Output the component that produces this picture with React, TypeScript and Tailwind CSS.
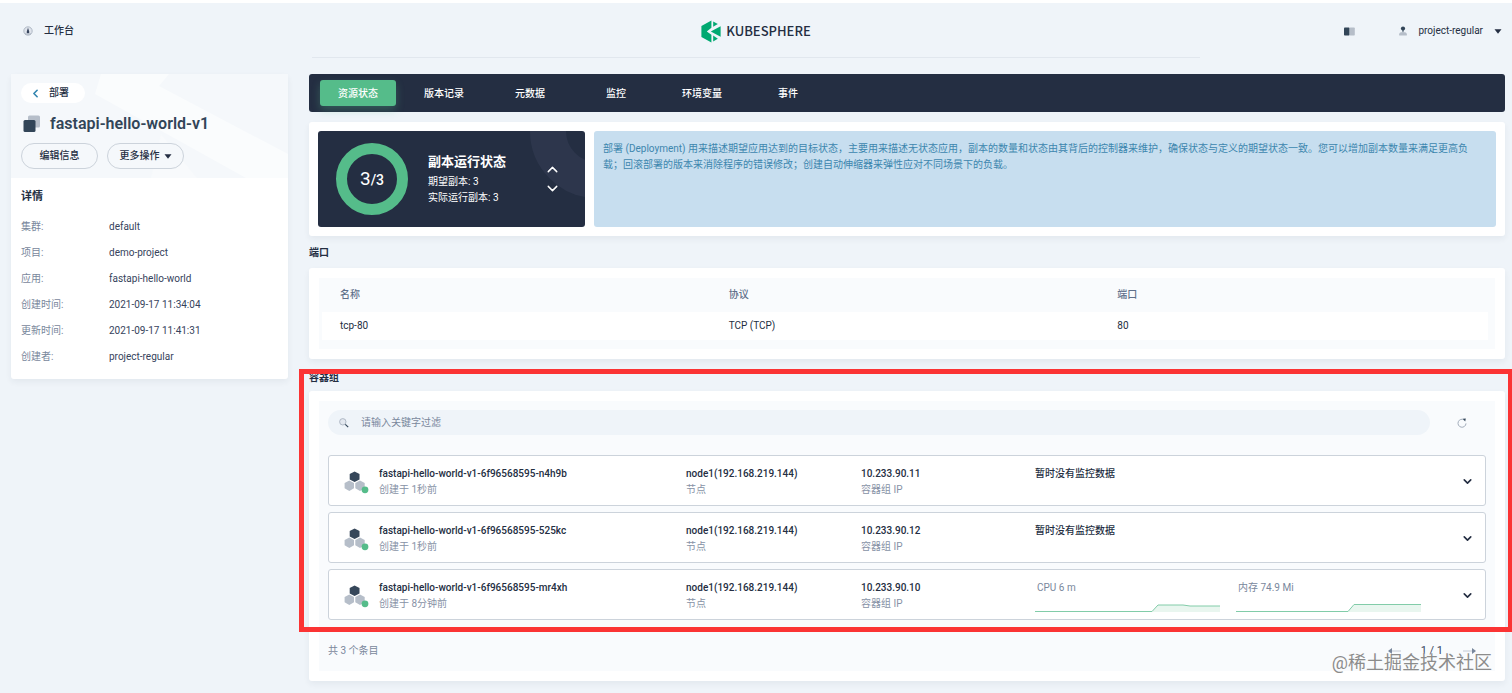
import { useState } from 'react';
import { ChevronDown, ChevronLeft, ChevronUp } from 'lucide-react';

// --- Data ---
const TABS = ['资源状态', '版本记录', '元数据', '监控', '环境变量', '事件'];

const DETAILS = [
  { label: '集群', value: 'default' },
  { label: '项目', value: 'demo-project' },
  { label: '应用', value: 'fastapi-hello-world' },
  { label: '创建时间', value: '2021-09-17 11:34:04' },
  { label: '更新时间', value: '2021-09-17 11:41:31' },
  { label: '创建者', value: 'project-regular' },
];

const PORTS = [{ name: 'tcp-80', protocol: 'TCP (TCP)', port: 80 }];

type Metric = { label: string; line: string };
type Pod = { name: string; age: string; node: string; ip: string; metrics?: Metric[] };

const PODS: Pod[] = [
  { name: 'fastapi-hello-world-v1-6f96568595-n4h9b', age: '1秒前', node: 'node1(192.168.219.144)', ip: '10.233.90.11' },
  { name: 'fastapi-hello-world-v1-6f96568595-525kc', age: '1秒前', node: 'node1(192.168.219.144)', ip: '10.233.90.12' },
  {
    name: 'fastapi-hello-world-v1-6f96568595-mr4xh',
    age: '8分钟前',
    node: 'node1(192.168.219.144)',
    ip: '10.233.90.10',
    metrics: [
      { label: 'CPU 6 m', line: '0,8.5 117,8.5 123,2 148,2 155,3 185,3' },
      { label: '内存 74.9 Mi', line: '0,8.5 112,8.5 118,1.5 185,1.5' },
    ],
  },
];

const CARD = 'rounded-[3px] bg-white shadow-[0_3px_6px_rgba(36,46,66,0.06)]';

// --- Icons ---
function Caret() {
  return (
    <svg width="8" height="5" viewBox="0 0 8 5" aria-hidden="true">
      <path d="M0.5 0.3h7L4 4.7z" fill="#242e42" />
    </svg>
  );
}

function DashboardIcon() {
  return (
    <svg width="10" height="10" viewBox="0 0 10 10" aria-hidden="true">
      <circle cx="5" cy="5" r="4.2" fill="#dfe4ec" stroke="#a2acba" strokeWidth="0.8" />
      <path d="M5 1.8L6.2 5.6a1.3 1.3 0 1 1-2.4 0z" fill="#36435c" />
      <path d="M2 8h6" stroke="#a2acba" strokeWidth="0.8" />
    </svg>
  );
}

function BookIcon() {
  return (
    <svg width="11" height="9" viewBox="0 0 11 9" aria-hidden="true">
      <rect x="0" y="0.5" width="5.6" height="8" rx="0.8" fill="#324558" />
      <rect x="5.6" y="0.5" width="5.2" height="8" rx="0.8" fill="#b6bec9" />
    </svg>
  );
}

function UserIcon() {
  return (
    <svg width="8" height="10" viewBox="0 0 8 10" aria-hidden="true">
      <path d="M0.2 9.6V8.2C0.2 6.8 1.6 6 4 6s3.8.8 3.8 2.2v1.4z" fill="#b6bec9" />
      <circle cx="4" cy="2.5" r="2.1" fill="#324558" />
      <path d="M3.3 3.5h1.4L4.4 6h-.8z" fill="#324558" />
    </svg>
  );
}

function LayersIcon() {
  return (
    <svg width="18" height="18" viewBox="0 0 18 18" aria-hidden="true">
      <rect x="5" y="0.5" width="12" height="12" rx="1.5" fill="#b6bec9" />
      <rect x="0.5" y="5" width="12" height="12" rx="1.5" fill="#324558" />
    </svg>
  );
}

function LogoMark() {
  return (
    <svg width="20" height="23" viewBox="0 0 20 23" aria-hidden="true">
      <path d="M10.4 0.4v7.4L5.8 11.4l4.6 3.4v7.8L0.4 17V6z" fill="#00a971" />
      <path d="M12.2 1.4l4.6 2.7-4.6 2.7z" fill="#00a971" />
      <path d="M19.6 6.2v10.6L9.8 11.4z" fill="#00a971" />
      <path d="M12.2 15.6l4.6 3.2-4.6 2.8z" fill="#00a971" />
    </svg>
  );
}

function SearchIcon() {
  return (
    <svg width="10" height="10" viewBox="0 0 10 10" fill="none" aria-hidden="true">
      <circle cx="3.8" cy="3.8" r="3.2" fill="#e3e8ef" stroke="#a2acba" strokeWidth="0.8" />
      <path d="M6.3 6.3L9.2 9.2" stroke="#324558" strokeWidth="1.2" />
    </svg>
  );
}

function RefreshIcon() {
  return (
    <svg width="10" height="10" viewBox="0 0 10 10" fill="none" aria-hidden="true">
      <path d="M7.2 1.9A4 4 0 1 0 9 5.4" stroke="#a2acba" />
      <path d="M5.8 0.8L8.8 0.4 8.2 3.4z" fill="#324558" />
    </svg>
  );
}

function PodIcon() {
  return (
    <svg width="25" height="25" viewBox="0 -2 25 25" aria-hidden="true">
      <path d="M10.6 0.4l4.9 2.7v5.3l-4.9 2.7-4.9-2.7V3.1z" fill="#36475a" />
      <path d="M5.3 9.5l4.7 2.6v5.2l-4.7 2.6-4.7-2.6v-5.2z" fill="#b6bec9" />
      <path d="M16 9.5l4.7 2.6v5.2L16 19.9l-4.7-2.6v-5.2z" fill="#b6bec9" />
      <circle cx="21" cy="18.8" r="3.4" fill="#55bc8a" />
    </svg>
  );
}

function Sparkline({ line }: { line: string }) {
  return (
    <svg className="h-[9px] w-full" viewBox="0 0 185 9" preserveAspectRatio="none" aria-hidden="true">
      <polygon points={`0,9 ${line} 185,9`} fill="#e9f6ef" />
      <polyline points={line} fill="none" stroke="#82cca9" />
    </svg>
  );
}

// --- Sections ---
function Header() {
  return (
    <header className="border-t-[3px] border-white">
      <div className="grid h-[54px] grid-cols-3 items-center px-[10px] pt-[2px]">
        <a href="#workbench" className="flex items-center gap-[11px] justify-self-start pl-[13px] font-medium">
          <DashboardIcon />
          工作台
        </a>
        <a href="#home" className="flex items-center gap-[5px] justify-self-center">
          <LogoMark />
          <span className="font-['Noto_Sans_CJK_SC',sans-serif] text-[13px] leading-5 font-medium">KUBESPHERE</span>
        </a>
        <div className="flex items-center gap-11 justify-self-end">
          <button type="button" aria-label="文档"><BookIcon /></button>
          <button type="button" className="flex items-center gap-[11px]">
            <UserIcon />
            <span>project-regular</span>
            <Caret />
          </button>
        </div>
      </div>
      <div className="mx-[312px] h-px bg-[#e1e7ee]" />
    </header>
  );
}

function Sidebar() {
  return (
    <aside className={`w-[277px] shrink-0 ${CARD}`}>
      <div className="relative h-[104px] overflow-hidden bg-[#f5f8fb] px-[10px] pt-[9px]">
        <svg className="absolute inset-0 h-full w-full" viewBox="0 0 277 104" aria-hidden="true">
          <path d="M90 0h68l-10 12 129 68v24h-42L84 20z" fill="#fafcfd" />
          <path d="M140 104L150 60l36 44z" fill="#f8fafc" />
        </svg>
        <div className="relative">
          <a href="#deployments" className="flex h-5 w-16 items-center rounded-full bg-white font-medium">
            <ChevronLeft className="ml-2 size-[13px] text-[#3385b0]" strokeWidth={3} />
            <span className="ml-[7px]">部署</span>
          </a>
          <div className="mt-[9px] flex h-6 items-center gap-[9px] pl-[2px]">
            <LayersIcon />
            <h1 className="text-[16px] leading-5 font-semibold text-[#324558]">fastapi-hello-world-v1</h1>
          </div>
          <div className="mt-[7px] flex gap-[9px] font-medium">
            <button type="button" className="h-[26px] w-[77px] rounded-full border border-[#ccd3db] bg-[#f5f8fb]">编辑信息</button>
            <button type="button" className="flex h-[26px] w-[77px] items-center justify-center gap-1 rounded-full border border-[#ccd3db] bg-[#f5f8fb]">
              更多操作
              <Caret />
            </button>
          </div>
        </div>
      </div>
      <div className="px-[10px] pt-[11px] pb-[9px]">
        <h2 className="mb-[9px] text-[11px] leading-4 font-bold">详情</h2>
        <dl>
          {DETAILS.map((d) => (
            <div key={d.label} className="flex h-[26px] items-center">
              <dt className="w-[88px] text-[#79879c]">{d.label}:</dt>
              <dd className="text-[#36435c]">{d.value}</dd>
            </div>
          ))}
        </dl>
      </div>
    </aside>
  );
}

function ReplicaStatus() {
  return (
    <section className={`mt-[10px] flex gap-[9px] p-[9px] ${CARD}`}>
      <div className="relative flex h-24 w-[267px] shrink-0 items-center overflow-hidden rounded-[3px] bg-[#242e42] pl-[18px] text-white">
        <svg className="absolute top-0 right-0" width="60" height="96" viewBox="0 0 60 96" aria-hidden="true">
          <circle cx="72" cy="0" r="49" fill="none" stroke="#2d364c" strokeWidth="36" />
        </svg>
        <div className="grid size-[72px] shrink-0 place-items-center rounded-full border-[11px] border-[#55bc8a]">
          <span className="text-[14px] leading-4 font-medium">
            <span className="text-[19px] font-normal">3</span>/3
          </span>
        </div>
        <div className="ml-5">
          <h3 className="mb-[3px] text-[13px] leading-[18px] font-bold">副本运行状态</h3>
          <p className="leading-4">期望副本: 3</p>
          <p className="leading-4">实际运行副本: 3</p>
        </div>
        <div className="relative mr-6 ml-auto flex flex-col gap-[2px]">
          <button type="button" aria-label="增加副本"><ChevronUp className="size-[17px]" strokeWidth={2} /></button>
          <button type="button" aria-label="减少副本"><ChevronDown className="size-[17px]" strokeWidth={2} /></button>
        </div>
      </div>
      <p className="flex-1 rounded-[3px] bg-[#c7deef] px-[9px] pt-[10px] leading-4 text-[#3d86ae]">
        部署 (Deployment) 用来描述期望应用达到的目标状态，主要用来描述无状态应用，副本的数量和状态由其背后的控制器来维护，确保状态与定义的期望状态一致。您可以增加副本数量来满足更高负载；回滚部署的版本来消除程序的错误修改；创建自动伸缩器来弹性应对不同场景下的负载。
      </p>
    </section>
  );
}

function Ports() {
  return (
    <section>
      <h2 className="flex h-8 items-center pt-[2px] font-bold">端口</h2>
      <div className={`p-[10px] ${CARD}`}>
        <div className="bg-[#f9fbfd] pr-[7px] pb-[9px] pl-[3px]">
          <table className="w-full table-fixed border-collapse text-left">
            <thead>
              <tr className="h-[34px] text-[#5f708a]">
                <th className="pl-[18px] font-medium">名称</th>
                <th className="pl-[18px] font-medium">协议</th>
                <th className="pl-[18px] font-medium">端口</th>
              </tr>
            </thead>
            <tbody>
              {PORTS.map((p) => (
                <tr key={p.name} className="h-7 bg-white">
                  <td className="pl-[18px]">{p.name}</td>
                  <td className="pl-[18px]">{p.protocol}</td>
                  <td className="pl-[18px]">{p.port}</td>
                </tr>
              ))}
            </tbody>
          </table>
        </div>
      </div>
    </section>
  );
}

function PodRow({ pod }: { pod: Pod }) {
  return (
    <li className="flex h-[51px] items-center rounded-[3px] border border-[#ccd3db] bg-white pt-[2px] pr-[11px] pl-[15px]">
      <PodIcon />
      <div className="ml-[10px] w-[307px]">
        <p className="font-medium">{pod.name}</p>
        <p className="text-[#8792a6]">创建于 {pod.age}</p>
      </div>
      <div className="w-[175px]">
        <p className="font-medium">{pod.node}</p>
        <p className="text-[#8792a6]">节点</p>
      </div>
      <div className="w-[174px]">
        <p className="font-medium">{pod.ip}</p>
        <p className="text-[#8792a6]">容器组 IP</p>
      </div>
      <div className="flex flex-1 gap-4 self-stretch pt-2 pr-10">
        {pod.metrics ? (
          pod.metrics.map((m) => (
            <div key={m.label} className="flex-1">
              <p className="mb-[7px] pl-[2px] text-[#79879c]">{m.label}</p>
              <Sparkline line={m.line} />
            </div>
          ))
        ) : (
          <p className="font-medium">暂时没有监控数据</p>
        )}
      </div>
      <button type="button" aria-label="展开">
        <ChevronDown className="size-[13px]" strokeWidth={3} />
      </button>
    </li>
  );
}

function Pods() {
  const [keyword, setKeyword] = useState('');
  const pods = PODS.filter((p) => p.name.includes(keyword));

  return (
    <section className="relative">
      <h2 className="flex h-8 items-center pt-[6px] font-bold">容器组</h2>
      <div className={`p-[10px] ${CARD}`}>
        <div className="bg-[#f9fbfd] px-[9px] pt-[9px]">
          <div className="flex items-center">
            <label className="flex h-[25px] flex-1 items-center gap-3 rounded-full bg-[#eff4f9] pl-[11px]">
              <SearchIcon />
              <input
                className="flex-1 outline-none placeholder:text-[#79879c]"
                placeholder="请输入关键字过滤"
                aria-label="请输入关键字过滤"
                value={keyword}
                onChange={(e) => setKeyword(e.target.value)}
              />
            </label>
            <button type="button" aria-label="刷新" className="mr-[19px] ml-[27px]"><RefreshIcon /></button>
          </div>
          <ul className="mt-5 flex flex-col gap-[6px]">
            {pods.map((p) => <PodRow key={p.name} pod={p} />)}
          </ul>
          <footer className="flex h-[51px] items-center justify-between pt-[10px] text-[#79879c]">
            <span>共 {pods.length} 个条目</span>
            <div className="mr-[10px] flex items-center gap-5">
              <button type="button" aria-label="上一页">
                <svg width="13" height="8" viewBox="0 0 13 8" aria-hidden="true">
                  <path d="M4 4h9" stroke="#c3cad5" />
                  <path d="M0 4l4-3v6z" fill="#79879c" />
                </svg>
              </button>
              <span className="text-[11px] text-[#36435c]">1 / 1</span>
              <button type="button" aria-label="下一页">
                <svg width="13" height="8" viewBox="0 0 13 8" aria-hidden="true">
                  <path d="M0 4h9" stroke="#c3cad5" />
                  <path d="M13 4L9 1v6z" fill="#79879c" />
                </svg>
              </button>
            </div>
          </footer>
        </div>
      </div>
      {/* Highlight frame over the pod list */}
      <div className="pointer-events-none absolute top-[10px] -right-2 -left-[10px] h-[263px] border-[5px] border-[#fb3434]" />
      <span className="pointer-events-none absolute right-[13px] bottom-[6px] text-[18px] leading-6 text-[#8c8c8c] [text-shadow:0_0_2px_#fff]">
        @稀土掘金技术社区
      </span>
    </section>
  );
}

export default function App() {
  const [tab, setTab] = useState(TABS[0]);

  return (
    <div className="min-h-screen overflow-x-hidden bg-[#eff4f9] font-['Roboto','Noto_Sans_CJK_SC',sans-serif] text-[10px] leading-4 text-[#242e42]">
      <Header />
      <div className="flex items-start gap-[21px] pt-4 pr-[7px] pb-3 pl-[11px]">
        <Sidebar />
        <main className="min-w-0 flex-1">
          <nav className="flex h-[38px] items-center gap-[10px] rounded-[3px] bg-[#242e42] px-[11px]">
            {TABS.map((t) => (
              <button
                key={t}
                type="button"
                onClick={() => setTab(t)}
                className={`h-[26px] w-[76px] rounded-[3px] pt-[2px] font-medium text-white ${t === tab ? 'bg-[#55bc8a] shadow-[0_4px_8px_rgba(85,188,138,0.3)]' : ''}`}
              >
                {t}
              </button>
            ))}
          </nav>
          <ReplicaStatus />
          <Ports />
          <Pods />
        </main>
      </div>
    </div>
  );
}
